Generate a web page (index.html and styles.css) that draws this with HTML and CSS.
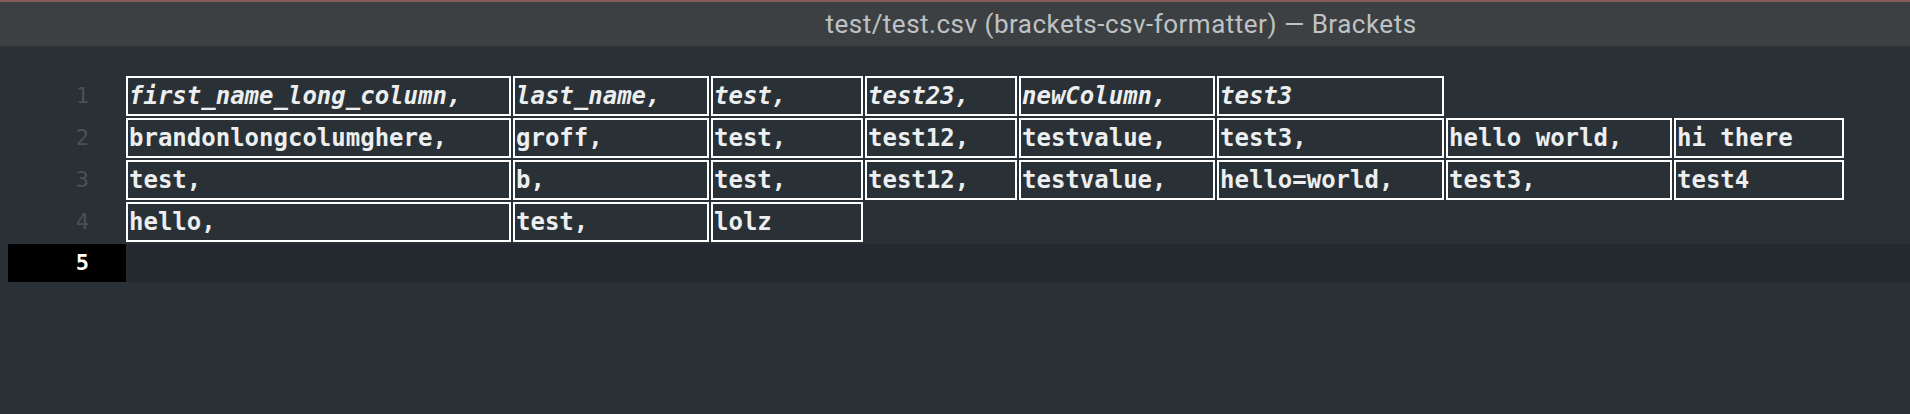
FILE: index.html
```html
<!DOCTYPE html>
<html>
<head>
<meta charset="utf-8">
<link rel="stylesheet" href="styles.css">
</head>
<body>
<div class="titlebar"><span class="title">test/test.csv (brackets-csv-formatter) — Brackets</span></div>
<div class="editor">
  <div class="line">
    <div class="gutter">1</div>
    <div class="cells">
      <span class="cell head">first_name_long_column,</span>
      <span class="cell head">last_name,</span>
      <span class="cell head">test,</span>
      <span class="cell head">test23,</span>
      <span class="cell head">newColumn,</span>
      <span class="cell head">test3</span>
    </div>
  </div>
  <div class="line">
    <div class="gutter">2</div>
    <div class="cells">
      <span class="cell">brandonlongcolumghere,</span>
      <span class="cell">groff,</span>
      <span class="cell">test,</span>
      <span class="cell">test12,</span>
      <span class="cell">testvalue,</span>
      <span class="cell">test3,</span>
      <span class="cell">hello world,</span>
      <span class="cell">hi there</span>
    </div>
  </div>
  <div class="line">
    <div class="gutter">3</div>
    <div class="cells">
      <span class="cell">test,</span>
      <span class="cell">b,</span>
      <span class="cell">test,</span>
      <span class="cell">test12,</span>
      <span class="cell">testvalue,</span>
      <span class="cell">hello=world,</span>
      <span class="cell">test3,</span>
      <span class="cell">test4</span>
    </div>
  </div>
  <div class="line">
    <div class="gutter">4</div>
    <div class="cells">
      <span class="cell">hello,</span>
      <span class="cell">test,</span>
      <span class="cell">lolz</span>
    </div>
  </div>
  <div class="line active">
    <div class="gutter">5</div>
    <div class="cells"></div>
  </div>
</div>
</body>
</html>
```
FILE: styles.css
```css
html, body {
  margin: 0;
  padding: 0;
  background: #293137;
  height: 100%;
}
.titlebar {
  height: 44px;
  border-top: 2px solid #8a5b5d;
  background: #3c4043;
  display: flex;
  align-items: center;
  justify-content: center;
  padding-left: 332px;
}
.title {
  font-family: Roboto, "Liberation Sans", sans-serif;
  font-size: 26px;
  letter-spacing: 0.5px;
  color: #bfc2c4;
  white-space: nowrap;
}
.editor {
  padding-top: 30px;
}
.line {
  display: flex;
  height: 42px;
}
.gutter {
  width: 118px;
  margin-left: 8px;
  box-sizing: border-box;
  padding-right: 37px;
  text-align: right;
  font-family: "DejaVu Sans Mono", monospace;
  font-size: 22px;
  line-height: 40px;
  color: #4a5055;
  flex: none;
}
.cells {
  display: grid;
  grid-template-columns: 385px 196px 152px 152px 196px 227px 226px 170px;
  column-gap: 2px;
  align-content: start;
  flex: 1;
}
.cell {
  box-sizing: border-box;
  height: 40px;
  border: 2px solid #ffffff;
  padding: 1px 0 0 1px;
  font-family: "DejaVu Sans Mono", monospace;
  font-weight: bold;
  font-size: 24px;
  line-height: 35px;
  color: #eceeef;
  white-space: pre;
  overflow: hidden;
}
.head {
  font-style: italic;
}
.active {
  height: 38px;
}
.active .gutter {
  background: #000000;
  color: #ffffff;
  font-weight: bold;
  line-height: 38px;
}
.active .cells {
  background: #242a30;
}
```
